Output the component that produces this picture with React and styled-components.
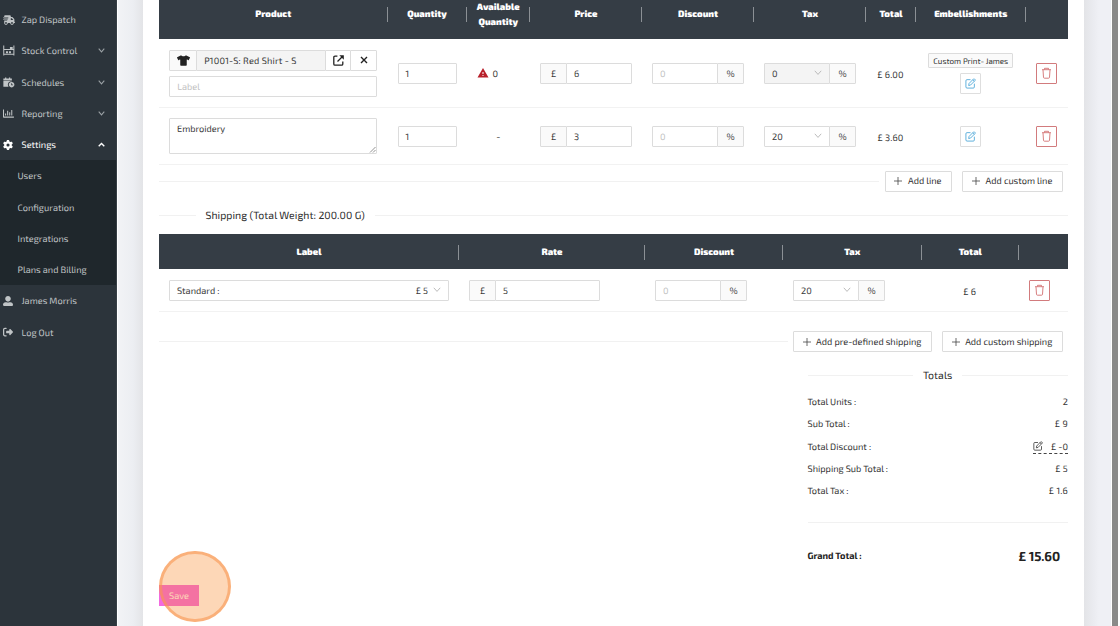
import styled, { createGlobalStyle } from 'styled-components';
import { FaTshirt, FaRegChartBar, FaUserAlt } from 'react-icons/fa';
import { FaTruckFast, FaGear, FaRightFromBracket } from 'react-icons/fa6';
import { MdWarning } from 'react-icons/md';

const GlobalStyle = createGlobalStyle`
  * { box-sizing: border-box; }
  body {
    margin: 0;
    background: #fff;
    font-family: "Exo 2", Roboto, "Open Sans", sans-serif;
    font-size: 9.2px;
    color: #333;
    overflow: hidden;
    text-rendering: geometricPrecision;
  }
`

const Page = styled.div`
  display: flex;
  width: 1120px;
  height: 626px;
  overflow: hidden;
`

/* sidebar */
const Sidebar = styled.nav`
  width: 117px;
  height: 100%;
  padding-top: 4px;
  background: #2c343b;
  border-right: 1px solid #384047;
`
const Item = styled.div`
  display: flex;
  align-items: center;
  height: 31.25px;
  padding: 0 11px 0 3px;
  color: ${(p) => (p.$active ? '#fff' : '#c0c4c6')};
`
const ItemIcon = styled.span`
  display: flex;
  width: 12px;
  margin-right: 6.5px;
`
const ItemText = styled.span`
  flex: 1;
  white-space: nowrap;
`
const SubMenu = styled.div`
  height: 125px;
  background: #1f272c;
`
const SubItem = styled.div`
  height: 31.25px;
  line-height: 31.25px;
  padding-left: 17.5px;
  color: #c0c4c6;
`

/* content */
const Content = styled.main`
  width: 995px;
  padding: 0 27px 0 25px;
  border-left: 1px solid #fff;
  border-right: 1px solid #fff;
  background: linear-gradient(90deg, #f2f3f6 0, #eceef2 15px, #e3e4e7 25px, #e3e4e7 966px, #eaebf0 975px, #eff0f5 981px);
`
const Card = styled.div`
  height: 100%;
  padding: 0 16px;
  background: #fff;
`
const Scrollbar = styled.div`
  width: 6px;
  background: #8a8a89;
`

/* tables */
const Row = styled.div`
  display: grid;
  grid-template-columns: ${(p) => p.$cols};
  height: ${(p) => p.$h}px;
  border-bottom: 1px solid #f2f2f2;
`
const HeadRow = styled(Row)`
  padding-top: ${(p) => p.$pt || 0}px;
  padding-bottom: ${(p) => p.$pb || 0}px;
  border-bottom: 0;
  background: #353d45;
  color: #fff;
  font-weight: 900;
`
const HeadCell = styled.div`
  display: flex;
  align-items: center;
  justify-content: center;
  text-align: center;
  line-height: 14.4px;
  position: relative;
  &:not(:last-child)::after {
    content: '';
    position: absolute;
    right: 0;
    top: calc(50% - 7.5px);
    width: 1px;
    height: 15px;
    background: #8b9095;
  }
`
const Cell = styled.div`
  display: flex;
  flex-direction: ${(p) => (p.$column ? 'column' : 'row')};
  align-items: center;
  justify-content: ${(p) => p.$justify || 'flex-start'};
  gap: ${(p) => p.$gap || 0}px;
  padding: 0 10px;
  white-space: nowrap;
`
const Amount = styled(Cell)`
  justify-content: center;
  padding: 2px 1px 0 0;
  letter-spacing: 0.1px;
`
const Box = styled.div`
  display: flex;
  align-items: center;
  justify-content: ${(p) => (p.$center ? 'center' : 'space-between')};
  width: ${(p) => p.$w}px;
  height: 21px;
  padding: ${(p) => (p.$center ? 0 : '0 7px')};
  border: 1px solid #dcdcdc;
  border-radius: 1px;
  background: ${(p) => p.$bg || '#fff'};
  color: ${(p) => p.$color || '#383838'};
  letter-spacing: ${(p) => p.$ls || 0}px;
  white-space: nowrap;
`
const Group = styled.div`
  display: flex;
  & > * + * {
    margin-left: -1px;
  }
`
const TextArea = styled(Box)`
  position: relative;
  align-items: flex-start;
  height: 36px;
  padding-top: 4px;
`
const Grip = styled.svg`
  position: absolute;
  right: 0;
  bottom: 0;
`
const Tag = styled.div`
  height: 15px;
  padding: 0 4px;
  border: 1px solid #dcdcdc;
  border-radius: 1px;
  background: #fafafa;
  font-size: 8px;
  line-height: 14px;
  white-space: nowrap;
`
const IconButton = styled.div`
  display: flex;
  align-items: center;
  justify-content: center;
  width: 21px;
  height: 21px;
  border: 1px solid ${(p) => (p.$danger ? '#d27b7d' : '#dedede')};
  border-radius: 1px;
  color: ${(p) => (p.$danger ? '#d27072' : '#4ba6d8')};
`
const Option = styled.span`
  display: flex;
  align-items: center;
  gap: 5px;
`

/* dividers with buttons or titles in them */
const Divider = styled.div`
  display: flex;
  align-items: center;
  height: ${(p) => p.$h}px;
  margin-top: ${(p) => p.$mt || 0}px;
  padding-right: ${(p) => p.$pr || 0}px;
`
const Line = styled.div`
  flex: ${(p) => (p.$w ? `0 0 ${p.$w}px` : 1)};
  height: 1px;
  background: #f1f1f1;
`
const Title = styled.div`
  padding: 1px 10px 0;
  color: #2c2c2c;
  font-size: 10.5px;
  line-height: 20px;
  letter-spacing: 0.04px;
  white-space: nowrap;
`
const Button = styled.div`
  display: flex;
  align-items: center;
  justify-content: center;
  gap: 5.5px;
  width: ${(p) => p.$w}px;
  height: 21px;
  margin-left: ${(p) => p.$ml}px;
  border: 1px solid #dcdcdc;
  border-radius: 1px;
  color: #333;
  line-height: 18px;
  white-space: nowrap;
`

/* totals */
const Totals = styled.section`
  width: 260.5px;
  margin: 12.5px 0 0 auto;
`
const TotalRow = styled.div`
  display: flex;
  align-items: center;
  justify-content: space-between;
  height: 22.3px;
`
const TotalValue = styled.span`
  letter-spacing: 0.2px;
`
const Editable = styled.span`
  display: flex;
  align-items: center;
  gap: 8px;
  height: 15px;
  margin-top: 1px;
  border-bottom: 1px dashed #444;
`
const GrandTotal = styled.div`
  display: flex;
  align-items: center;
  justify-content: space-between;
  height: 66px;
  margin-top: 20.5px;
  padding-right: 8px;
  border-top: 1px solid #f1f1f1;
  color: #222;
  font-weight: 700;
`
const GrandAmount = styled.span`
  font-size: 13px;
  letter-spacing: -0.1px;
`

const Footer = styled.div`
  position: relative;
  margin-top: -3.5px;
`
const Save = styled.div`
  width: 40px;
  height: 21px;
  background: #f26ae0;
  color: #fff;
  line-height: 21px;
  text-align: center;
`
const ClickMark = styled.div`
  position: absolute;
  left: 0;
  top: -34px;
  width: 71.5px;
  height: 71.5px;
  border: 3px solid rgba(247, 150, 80, 0.6);
  border-radius: 50%;
  background: rgba(250, 130, 30, 0.32);
`

const Chevron = ({ up, color = '#9ba1a5', w = 7, sw = 1.1 }) => (
  <svg width={w} height={w * 0.7} viewBox="0 0 10 7" fill="none" stroke={color} strokeWidth={sw * 1.4}>
    <path d={up ? 'M1 6 5 2 9 6' : 'M1 1 5 5.5 9 1'} />
  </svg>
)
const Arrow = () => <Chevron color="#b4b4b4" w={8} sw={0.8} />

const StockIcon = () => (
  <svg width="13" height="11" viewBox="0 0 13 11" fill="none" stroke="currentColor">
    <path d="M.8 0V11M11.8 0V11M1 4.5H12M1 9.5H12" strokeWidth="1.1" />
    <path d="M3.2 7.5H5.4M6.4 7.5H8.6M7.5 2.8H10.5" strokeWidth="2.2" />
  </svg>
)
const ScheduleIcon = () => (
  <svg width="13" height="11" viewBox="0 0 13 11" fill="currentColor">
    <path d="M2.2 0H3.6V1.3H6.4V0H7.8V1.3H9.6V3H.4V1.3H2.2ZM.4 3.7H9.6V4.3A3.6 3.6 0 0 0 6 10H.4Z" />
    <path fillRule="evenodd" d="M9.3 4.9a3 3 0 1 0 .01 0ZM8.9 6.2H9.7V7.7H10.9V8.5H8.9Z" />
  </svg>
)
const Trash = () => (
  <svg width="11" height="12" viewBox="0 0 11 12" fill="none" stroke="currentColor" strokeWidth="0.9">
    <path d="M1 2.7H10M3.5 2.5V1.3H7.5V2.5M2 2.9 2.5 10.3Q2.6 11.2 3.4 11.2H7.6Q8.4 11.2 8.5 10.3L9 2.9" />
  </svg>
)
const Edit = ({ size = 11 }) => (
  <svg width={size} height={size} viewBox="0 0 12 12" fill="none" stroke="currentColor" strokeWidth="0.95">
    <path d="M6 1.8H2.2Q1 1.8 1 3V9.8Q1 11 2.2 11H9Q10.2 11 10.2 9.8V6.2" />
    <path d="M4 8.2 4.4 6 9.2 1.1Q9.8.6 10.4 1.1L10.9 1.6Q11.4 2.2 10.9 2.8L6.1 7.7ZM8.4 2 10 3.6" />
  </svg>
)
const External = () => (
  <svg width="11" height="11" viewBox="0 0 11 11" fill="none" stroke="#222" strokeWidth="1.3">
    <path d="M4.4 1.2H2Q.8 1.2.8 2.4V9Q.8 10.2 2 10.2H8.6Q9.8 10.2 9.8 9V6.6M4.5 6.5 9 2" />
    <path d="M6.3.2H10.8V4.7Z" fill="#222" stroke="none" />
  </svg>
)
const Cross = () => (
  <svg width="8" height="8" viewBox="0 0 8 8" stroke="#222" strokeWidth="1.4">
    <path d="M1 1 7 7M7 1 1 7" />
  </svg>
)
const Plus = () => (
  <svg width="8" height="8" viewBox="0 0 8 8" stroke="#444" strokeWidth="0.8">
    <path d="M4 0V8M0 4H8" />
  </svg>
)

const PRODUCT_COLS = '228.5px 79px 63.5px 112px 112px 112px 50px 109.5px 42.5px'
const SHIPPING_COLS = '300px 186px 138px 138.5px 97.5px 49px'

const Money = ({ value, w = 66 }) => (
  <Group>
    <Box $w={27} $center $bg="#fafafa">£</Box>
    <Box $w={w}>{value}</Box>
  </Group>
)
const Discount = () => (
  <Group>
    <Box $w={66} $color="#bfbfbf">0</Box>
    <Box $w={27} $center $bg="#fafafa">%</Box>
  </Group>
)
const Tax = ({ value, disabled }) => (
  <Group>
    <Box $w={66} $bg={disabled && '#f4f4f4'} $ls={0.2}>{value}<Arrow /></Box>
    <Box $w={27} $center $bg="#fafafa">%</Box>
  </Group>
)

const App = () => {
  return (
    <Page>
      <GlobalStyle />
      <Sidebar>
        <Item><ItemIcon><FaTruckFast size={12} /></ItemIcon><ItemText>Zap Dispatch</ItemText></Item>
        <Item><ItemIcon><StockIcon /></ItemIcon><ItemText>Stock Control</ItemText><Chevron /></Item>
        <Item><ItemIcon><ScheduleIcon /></ItemIcon><ItemText>Schedules</ItemText><Chevron /></Item>
        <Item><ItemIcon><FaRegChartBar size={11} /></ItemIcon><ItemText>Reporting</ItemText><Chevron /></Item>
        <Item $active><ItemIcon><FaGear size={10} /></ItemIcon><ItemText>Settings</ItemText><Chevron up color="#fff" sw={1.4} /></Item>
        <SubMenu>
          <SubItem>Users</SubItem>
          <SubItem>Configuration</SubItem>
          <SubItem>Integrations</SubItem>
          <SubItem>Plans and Billing</SubItem>
        </SubMenu>
        <Item><ItemIcon><FaUserAlt size={10} /></ItemIcon><ItemText>James Morris</ItemText></Item>
        <Item><ItemIcon><FaRightFromBracket size={10} /></ItemIcon><ItemText>Log Out</ItemText></Item>
      </Sidebar>

      <Content>
        <Card>
          <HeadRow $cols={PRODUCT_COLS} $h={39} $pb={10}>
            <HeadCell>Product</HeadCell>
            <HeadCell>Quantity</HeadCell>
            <HeadCell>Available<br />Quantity</HeadCell>
            <HeadCell>Price</HeadCell>
            <HeadCell>Discount</HeadCell>
            <HeadCell>Tax</HeadCell>
            <HeadCell>Total</HeadCell>
            <HeadCell>Embellishments</HeadCell>
            <HeadCell />
          </HeadRow>
          <Row $cols={PRODUCT_COLS} $h={69}>
            <Cell $column $gap={5} $justify="center">
              <Group>
                <Box $w={28} $center $bg="#fafafa"><FaTshirt size={13} color="#222" /></Box>
                <Box $w={130} $bg="#f4f4f4" $ls={0.18}>P1001-S: Red Shirt - S</Box>
                <Box $w={26} $center><External /></Box>
                <Box $w={27} $center><Cross /></Box>
              </Group>
              <Box $w={208} $color="#bfbfbf">Label</Box>
            </Cell>
            <Cell><Box $w={59}>1</Box></Cell>
            <Cell $gap={4}><MdWarning size={12} color="#b8202b" />0</Cell>
            <Cell><Money value="6" /></Cell>
            <Cell><Discount /></Cell>
            <Cell><Tax value="0" disabled /></Cell>
            <Amount>£ 6.00</Amount>
            <Cell $column $gap={5} $justify="center">
              <Tag>Custom Print- James</Tag>
              <IconButton><Edit /></IconButton>
            </Cell>
            <Cell $justify="center"><IconButton $danger><Trash /></IconButton></Cell>
          </Row>
          <Row $cols={PRODUCT_COLS} $h={57}>
            <Cell>
              <TextArea $w={208}>
                Embroidery
                <Grip width="7" height="7" viewBox="0 0 7 7" stroke="#777" strokeWidth="0.8">
                  <path d="M1 6.5 6.5 1M4 6.5 6.5 4" />
                </Grip>
              </TextArea>
            </Cell>
            <Cell><Box $w={59}>1</Box></Cell>
            <Cell $justify="center">-</Cell>
            <Cell><Money value="3" /></Cell>
            <Cell><Discount /></Cell>
            <Cell><Tax value="20" /></Cell>
            <Amount>£ 3.60</Amount>
            <Cell $justify="center"><IconButton><Edit /></IconButton></Cell>
            <Cell $justify="center"><IconButton $danger><Trash /></IconButton></Cell>
          </Row>

          <Divider $h={22} $mt={5} $pr={5.5}>
            <Line />
            <Button $w={67} $ml={5.5}><Plus />Add line</Button>
            <Button $w={100.5} $ml={10.5}><Plus />Add custom line</Button>
          </Divider>
          <Divider $h={20} $mt={13.5}>
            <Line $w={36.5} />
            <Title>Shipping (Total Weight: 200.00 G)</Title>
            <Line />
          </Divider>

          <Divider $h={8.5} />
          <HeadRow $cols={SHIPPING_COLS} $h={35} $pt={1}>
            <HeadCell>Label</HeadCell>
            <HeadCell>Rate</HeadCell>
            <HeadCell>Discount</HeadCell>
            <HeadCell>Tax</HeadCell>
            <HeadCell>Total</HeadCell>
            <HeadCell />
          </HeadRow>
          <Row $cols={SHIPPING_COLS} $h={43}>
            <Cell>
              <Box $w={280}>Standard :<Option>£ 5 <Arrow /></Option></Box>
            </Cell>
            <Cell><Money value="5" w={105} /></Cell>
            <Cell><Discount /></Cell>
            <Cell><Tax value="20" /></Cell>
            <Amount>£ 6</Amount>
            <Cell><IconButton $danger><Trash /></IconButton></Cell>
          </Row>
          <Divider $h={22} $mt={18.5} $pr={5.5}>
            <Line />
            <Button $w={139} $ml={5}><Plus />Add pre-defined shipping</Button>
            <Button $w={121} $ml={10}><Plus />Add custom shipping</Button>
          </Divider>

          <Totals>
            <Divider $h={21}>
              <Line />
              <Title>Totals</Title>
              <Line />
            </Divider>
            <Divider $h={4.5} />
            <TotalRow><span>Total Units :</span><TotalValue>2</TotalValue></TotalRow>
            <TotalRow><span>Sub Total :</span><TotalValue>£ 9</TotalValue></TotalRow>
            <TotalRow><span>Total Discount :</span><Editable><Edit size={10} />£ -0</Editable></TotalRow>
            <TotalRow><span>Shipping Sub Total :</span><TotalValue>£ 5</TotalValue></TotalRow>
            <TotalRow><span>Total Tax :</span><TotalValue>£ 1.6</TotalValue></TotalRow>
            <GrandTotal><span>Grand Total :</span><GrandAmount>£ 15.60</GrandAmount></GrandTotal>
          </Totals>

          <Footer>
            <Save>Save</Save>
            <ClickMark />
          </Footer>
        </Card>
      </Content>
      <Scrollbar />
    </Page>
  )
}

export default App
